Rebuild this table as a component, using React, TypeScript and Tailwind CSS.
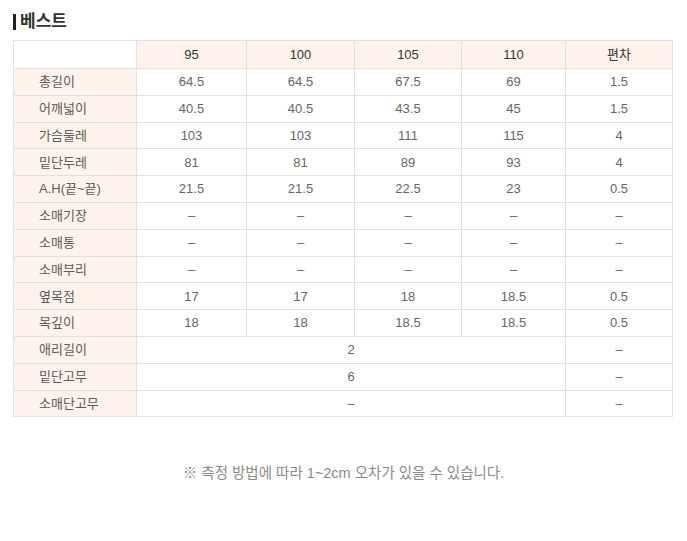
const sizes = ['95', '100', '105', '110'];

const rows: { label: string; values: string[]; dev: string }[] = [
  { label: '총길이', values: ['64.5', '64.5', '67.5', '69'], dev: '1.5' },
  { label: '어깨넓이', values: ['40.5', '40.5', '43.5', '45'], dev: '1.5' },
  { label: '가슴둘레', values: ['103', '103', '111', '115'], dev: '4' },
  { label: '밑단두레', values: ['81', '81', '89', '93'], dev: '4' },
  { label: 'A.H(끝~끝)', values: ['21.5', '21.5', '22.5', '23'], dev: '0.5' },
  { label: '소매기장', values: ['–', '–', '–', '–'], dev: '–' },
  { label: '소매통', values: ['–', '–', '–', '–'], dev: '–' },
  { label: '소매부리', values: ['–', '–', '–', '–'], dev: '–' },
  { label: '옆목점', values: ['17', '17', '18', '18.5'], dev: '0.5' },
  { label: '목깊이', values: ['18', '18', '18.5', '18.5'], dev: '0.5' },
];

const merged: { label: string; value: string; dev: string }[] = [
  { label: '애리길이', value: '2', dev: '–' },
  { label: '밑단고무', value: '6', dev: '–' },
  { label: '소매단고무', value: '–', dev: '–' },
];

const cell = 'border border-[#e3e0de] text-center';
const label = 'border border-[#e3e0de] bg-[#fdf3ec] pl-[25px] text-left text-[#5a5a5a]';

export default function App() {
  return (
    <div
      className="w-[687px] h-[541px] bg-white text-[13px]"
      style={{ fontFamily: '"Liberation Sans", "Noto Sans CJK KR", sans-serif' }}
    >
      <div className="flex items-start gap-[4px] pl-[13px] pt-[12px] h-[40px]">
        <span className="mt-[2px] block w-[3px] h-[16px] bg-[#222]" />
        <span className="text-[17px] font-bold text-[#333] leading-[20px]">베스트</span>
      </div>

      <table className="ml-[13px] w-[659px] border-collapse table-fixed">
        <colgroup>
          <col className="w-[123px]" />
          <col className="w-[110px]" />
          <col className="w-[108px]" />
          <col className="w-[107px]" />
          <col className="w-[104px]" />
          <col className="w-[107px]" />
        </colgroup>
        <thead>
          <tr className="h-[28px] bg-[#fdf3ec] text-[#333]">
            <th className="border border-[#e3e0de] bg-white" />
            {sizes.map((s) => (
              <th key={s} className={cell + ' font-normal'}>{s}</th>
            ))}
            <th className={cell + ' font-normal'}>편차</th>
          </tr>
        </thead>
        <tbody className="text-[#666]">
          {rows.map((r) => (
            <tr key={r.label} className="h-[26.8px]">
              <td className={label}>{r.label}</td>
              {r.values.map((v, i) => (
                <td key={i} className={cell}>{v}</td>
              ))}
              <td className={cell}>{r.dev}</td>
            </tr>
          ))}
          {merged.map((r) => (
            <tr key={r.label} className="h-[26.8px]">
              <td className={label}>{r.label}</td>
              <td colSpan={4} className={cell}>{r.value}</td>
              <td className={cell}>{r.dev}</td>
            </tr>
          ))}
        </tbody>
      </table>

      <p className="mt-[46px] text-center text-[14.5px] text-[#8a8a8a]">
        ※ 측정 방법에 따라 1~2cm 오차가 있을 수 있습니다.
      </p>
    </div>
  );
}
